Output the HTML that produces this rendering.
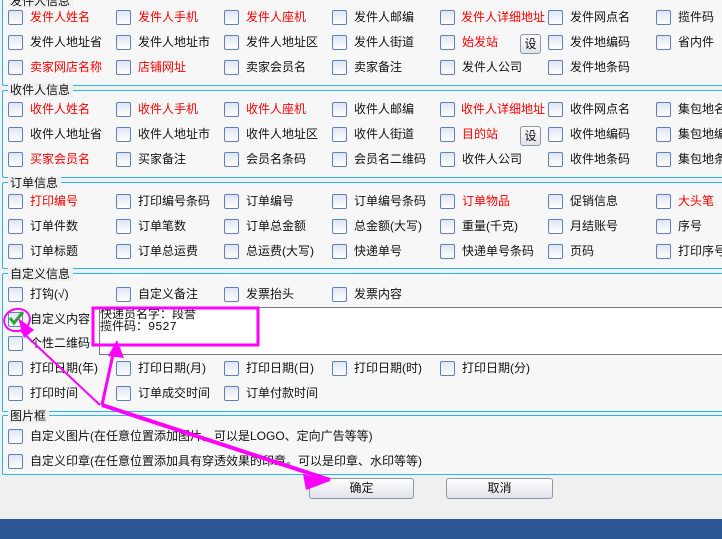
<!DOCTYPE html>
<html><head><meta charset="utf-8"><style>
body{margin:0;width:722px;height:539px;overflow:hidden;background:#f0f0f0;position:relative;font-family:"Liberation Sans","Noto Sans CJK SC","WenQuanYi Zen Hei",sans-serif;font-size:12px;color:#111}
.f{position:absolute;left:2px;width:730px;border:1px solid #29b6f0;border-radius:2px;background:#f7f7f7}
.lg{position:absolute;left:8px;background:#f0f0f0;padding:0 3px 0 2px;font-size:12px;line-height:14px}
.c{position:absolute;width:13px;height:13px;border:1px solid #5f7fbf;border-radius:2px;background:linear-gradient(#dfe6f3,#fff)}
.t{position:absolute;line-height:16px;white-space:nowrap}
.r{color:#f00}
.b{position:absolute;border:1px solid #8a98ab;border-radius:3px;background:linear-gradient(#fdfdfd,#dfe3ea);text-align:center;font-size:12px}
</style></head><body>
<div class="f" style="top:-5px;height:89px"></div>
<div class="lg" style="top:-6px">发件人信息</div>
<div class="f" style="top:90px;height:86px"></div>
<div class="lg" style="top:83px">收件人信息</div>
<div class="f" style="top:182px;height:85px"></div>
<div class="lg" style="top:176px">订单信息</div>
<div class="f" style="top:273px;height:137px"></div>
<div class="lg" style="top:267px">自定义信息</div>
<div class="f" style="top:415px;height:58px"></div>
<div class="lg" style="top:409px">图片框</div>

<div class="c" style="left:8px;top:10px"></div><div class="t r" style="left:30px;top:9px">发件人姓名</div>
<div class="c" style="left:116px;top:10px"></div><div class="t r" style="left:138px;top:9px">发件人手机</div>
<div class="c" style="left:224px;top:10px"></div><div class="t r" style="left:246px;top:9px">发件人座机</div>
<div class="c" style="left:332px;top:10px"></div><div class="t" style="left:354px;top:9px">发件人邮编</div>
<div class="c" style="left:440px;top:10px"></div><div class="t r" style="left:461px;top:9px">发件人详细地址</div>
<div class="c" style="left:548px;top:10px"></div><div class="t" style="left:570px;top:9px">发件网点名</div>
<div class="c" style="left:656px;top:10px"></div><div class="t" style="left:678px;top:9px">揽件码</div>

<div class="c" style="left:8px;top:35px"></div><div class="t" style="left:30px;top:34px">发件人地址省</div>
<div class="c" style="left:116px;top:35px"></div><div class="t" style="left:138px;top:34px">发件人地址市</div>
<div class="c" style="left:224px;top:35px"></div><div class="t" style="left:246px;top:34px">发件人地址区</div>
<div class="c" style="left:332px;top:35px"></div><div class="t" style="left:354px;top:34px">发件人街道</div>
<div class="c" style="left:440px;top:35px"></div><div class="t r" style="left:462px;top:34px">始发站</div>
<div class="b" style="left:520px;top:34px;width:19px;height:18px;line-height:18px">设</div>
<div class="c" style="left:548px;top:35px"></div><div class="t" style="left:570px;top:34px">发件地编码</div>
<div class="c" style="left:656px;top:35px"></div><div class="t" style="left:678px;top:34px">省内件</div>

<div class="c" style="left:8px;top:60px"></div><div class="t r" style="left:30px;top:59px">卖家网店名称</div>
<div class="c" style="left:116px;top:60px"></div><div class="t r" style="left:138px;top:59px">店铺网址</div>
<div class="c" style="left:224px;top:60px"></div><div class="t" style="left:246px;top:59px">卖家会员名</div>
<div class="c" style="left:332px;top:60px"></div><div class="t" style="left:354px;top:59px">卖家备注</div>
<div class="c" style="left:440px;top:60px"></div><div class="t" style="left:462px;top:59px">发件人公司</div>
<div class="c" style="left:548px;top:60px"></div><div class="t" style="left:570px;top:59px">发件地条码</div>

<div class="c" style="left:8px;top:102px"></div><div class="t r" style="left:30px;top:101px">收件人姓名</div>
<div class="c" style="left:116px;top:102px"></div><div class="t r" style="left:138px;top:101px">收件人手机</div>
<div class="c" style="left:224px;top:102px"></div><div class="t r" style="left:246px;top:101px">收件人座机</div>
<div class="c" style="left:332px;top:102px"></div><div class="t" style="left:354px;top:101px">收件人邮编</div>
<div class="c" style="left:440px;top:102px"></div><div class="t r" style="left:461px;top:101px">收件人详细地址</div>
<div class="c" style="left:548px;top:102px"></div><div class="t" style="left:570px;top:101px">收件网点名</div>
<div class="c" style="left:656px;top:102px"></div><div class="t" style="left:678px;top:101px">集包地名</div>

<div class="c" style="left:8px;top:127px"></div><div class="t" style="left:30px;top:126px">收件人地址省</div>
<div class="c" style="left:116px;top:127px"></div><div class="t" style="left:138px;top:126px">收件人地址市</div>
<div class="c" style="left:224px;top:127px"></div><div class="t" style="left:246px;top:126px">收件人地址区</div>
<div class="c" style="left:332px;top:127px"></div><div class="t" style="left:354px;top:126px">收件人街道</div>
<div class="c" style="left:440px;top:127px"></div><div class="t r" style="left:462px;top:126px">目的站</div>
<div class="b" style="left:520px;top:126px;width:19px;height:18px;line-height:18px">设</div>
<div class="c" style="left:548px;top:127px"></div><div class="t" style="left:570px;top:126px">收件地编码</div>
<div class="c" style="left:656px;top:127px"></div><div class="t" style="left:678px;top:126px">集包地编</div>

<div class="c" style="left:8px;top:152px"></div><div class="t r" style="left:30px;top:151px">买家会员名</div>
<div class="c" style="left:116px;top:152px"></div><div class="t" style="left:138px;top:151px">买家备注</div>
<div class="c" style="left:224px;top:152px"></div><div class="t" style="left:246px;top:151px">会员名条码</div>
<div class="c" style="left:332px;top:152px"></div><div class="t" style="left:354px;top:151px">会员名二维码</div>
<div class="c" style="left:440px;top:152px"></div><div class="t" style="left:462px;top:151px">收件人公司</div>
<div class="c" style="left:548px;top:152px"></div><div class="t" style="left:570px;top:151px">收件地条码</div>
<div class="c" style="left:656px;top:152px"></div><div class="t" style="left:678px;top:151px">集包地条</div>

<div class="c" style="left:8px;top:194px"></div><div class="t r" style="left:30px;top:193px">打印编号</div>
<div class="c" style="left:116px;top:194px"></div><div class="t" style="left:138px;top:193px">打印编号条码</div>
<div class="c" style="left:224px;top:194px"></div><div class="t" style="left:246px;top:193px">订单编号</div>
<div class="c" style="left:332px;top:194px"></div><div class="t" style="left:354px;top:193px">订单编号条码</div>
<div class="c" style="left:440px;top:194px"></div><div class="t r" style="left:462px;top:193px">订单物品</div>
<div class="c" style="left:548px;top:194px"></div><div class="t" style="left:570px;top:193px">促销信息</div>
<div class="c" style="left:656px;top:194px"></div><div class="t r" style="left:678px;top:193px">大头笔</div>

<div class="c" style="left:8px;top:219px"></div><div class="t" style="left:30px;top:218px">订单件数</div>
<div class="c" style="left:116px;top:219px"></div><div class="t" style="left:138px;top:218px">订单笔数</div>
<div class="c" style="left:224px;top:219px"></div><div class="t" style="left:246px;top:218px">订单总金额</div>
<div class="c" style="left:332px;top:219px"></div><div class="t" style="left:354px;top:218px">总金额(大写)</div>
<div class="c" style="left:440px;top:219px"></div><div class="t" style="left:462px;top:218px">重量(千克)</div>
<div class="c" style="left:548px;top:219px"></div><div class="t" style="left:570px;top:218px">月结账号</div>
<div class="c" style="left:656px;top:219px"></div><div class="t" style="left:678px;top:218px">序号</div>

<div class="c" style="left:8px;top:244px"></div><div class="t" style="left:30px;top:243px">订单标题</div>
<div class="c" style="left:116px;top:244px"></div><div class="t" style="left:138px;top:243px">订单总运费</div>
<div class="c" style="left:224px;top:244px"></div><div class="t" style="left:246px;top:243px">总运费(大写)</div>
<div class="c" style="left:332px;top:244px"></div><div class="t" style="left:354px;top:243px">快递单号</div>
<div class="c" style="left:440px;top:244px"></div><div class="t" style="left:462px;top:243px">快递单号条码</div>
<div class="c" style="left:548px;top:244px"></div><div class="t" style="left:570px;top:243px">页码</div>
<div class="c" style="left:656px;top:244px"></div><div class="t" style="left:678px;top:243px">打印序号</div>

<div class="c" style="left:8px;top:287px"></div><div class="t" style="left:30px;top:286px">打钩(√)</div>
<div class="c" style="left:116px;top:287px"></div><div class="t" style="left:138px;top:286px">自定义备注</div>
<div class="c" style="left:224px;top:287px"></div><div class="t" style="left:246px;top:286px">发票抬头</div>
<div class="c" style="left:332px;top:287px"></div><div class="t" style="left:354px;top:286px">发票内容</div>

<div class="c" style="left:8px;top:312px"></div>
<svg style="position:absolute;left:7px;top:309px" width="18" height="18"><path d="M3 9 L7 14 L16 3" stroke="#2fa32f" stroke-width="3" fill="none"/></svg>
<div class="t" style="left:30px;top:311px">自定义内容</div>
<div style="position:absolute;left:99px;top:307px;width:630px;height:46px;border:1px solid #7a7a7a;background:#fff"></div>
<div class="t" style="left:100px;top:309px;font-family:'Liberation Mono','Noto Sans CJK SC',monospace;font-size:12px;line-height:12px">快递员名字：段誉<br>揽件码：9527</div>
<div class="c" style="left:8px;top:336px"></div><div class="t" style="left:30px;top:335px">个性二维码</div>

<div class="c" style="left:8px;top:361px"></div><div class="t" style="left:30px;top:360px">打印日期(年)</div>
<div class="c" style="left:116px;top:361px"></div><div class="t" style="left:138px;top:360px">打印日期(月)</div>
<div class="c" style="left:224px;top:361px"></div><div class="t" style="left:246px;top:360px">打印日期(日)</div>
<div class="c" style="left:332px;top:361px"></div><div class="t" style="left:354px;top:360px">打印日期(时)</div>
<div class="c" style="left:440px;top:361px"></div><div class="t" style="left:462px;top:360px">打印日期(分)</div>

<div class="c" style="left:8px;top:386px"></div><div class="t" style="left:30px;top:385px">打印时间</div>
<div class="c" style="left:116px;top:386px"></div><div class="t" style="left:138px;top:385px">订单成交时间</div>
<div class="c" style="left:224px;top:386px"></div><div class="t" style="left:246px;top:385px">订单付款时间</div>

<div class="c" style="left:8px;top:429px"></div><div class="t" style="left:30px;top:428px">自定义图片(在任意位置添加图片。可以是LOGO、定向广告等等)</div>
<div class="c" style="left:8px;top:454px"></div><div class="t" style="left:30px;top:453px">自定义印章(在任意位置添加具有穿透效果的印章。可以是印章、水印等等)</div>

<div class="b" style="left:309px;top:478px;width:103px;height:19px;line-height:19px">确定</div>
<div class="b" style="left:446px;top:478px;width:105px;height:19px;line-height:19px">取消</div>

<div style="position:absolute;left:0;top:519px;width:722px;height:20px;background:#2b5797"></div>

<svg style="position:absolute;left:0;top:0" width="722" height="539">
<rect x="93" y="308" width="165" height="37" fill="none" stroke="#f0f" stroke-width="3"/>
<ellipse cx="17" cy="320" rx="13" ry="11" fill="none" stroke="#f0f" stroke-width="2" transform="rotate(-15 17 320)"/>
<path d="M102 405 L330 480" stroke="#f0f" stroke-width="4"/>
<path d="M100 405 L20 330" stroke="#f0f" stroke-width="2"/>
<path d="M102 405 L115 345" stroke="#f0f" stroke-width="3"/>
<polygon points="303,474 330,481 306,490" fill="#f0f"/>
<polygon points="18,318 34,330 24,338" fill="#f0f"/>
<polygon points="117,340 108,356 124,358" fill="#f0f"/>
</svg>
</body></html>
